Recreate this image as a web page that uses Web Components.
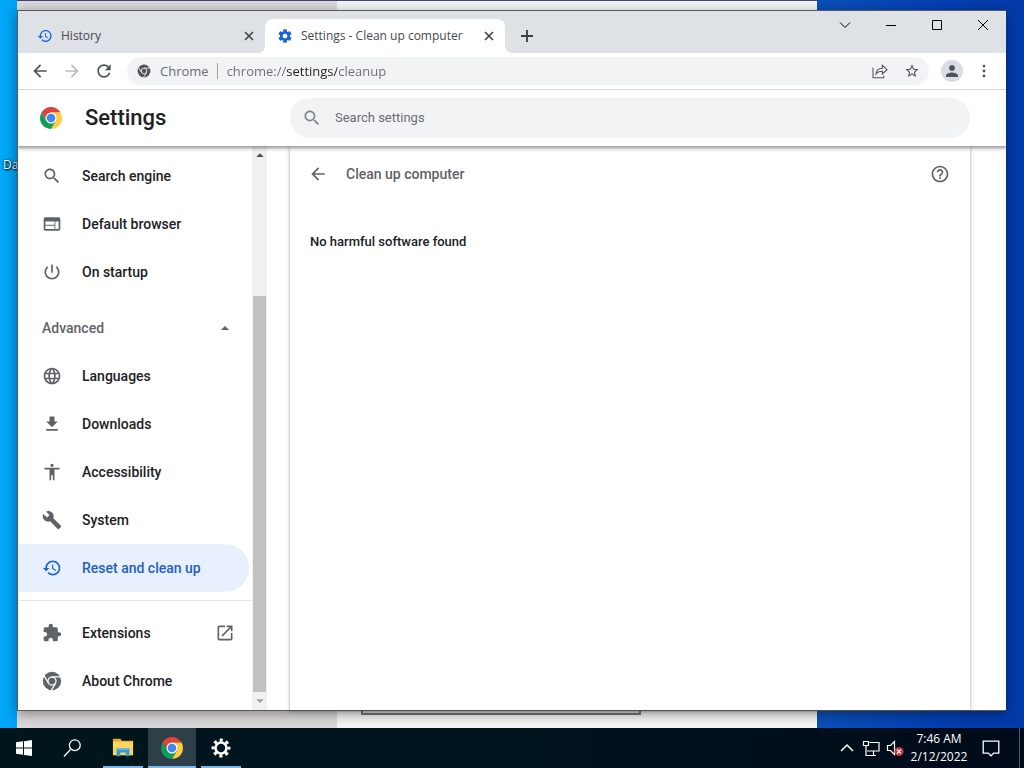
<!DOCTYPE html>
<html lang="en">
<head>
<meta charset="utf-8">
<meta name="viewport" content="width=device-width, initial-scale=1">
<title>Settings - Clean up computer</title>
<style>
  html, body { height: 100%; margin: 0; }
  body { overflow: hidden; font-family: "Open Sans", "Noto Sans", sans-serif; font-size: 12px; }
</style>
</head>
<body>
<desktop-shell>
  <backdrop-window></backdrop-window>
  <browser-window>
    <tab-strip slot="tabs">
      <browser-tab icon="restore">History</browser-tab>
      <browser-tab icon="gear" active>Settings - Clean up computer</browser-tab>
    </tab-strip>
    <browser-toolbar slot="toolbar"></browser-toolbar>
    <settings-page>
      <settings-menu slot="menu">
        <menu-item icon="search">Search engine</menu-item>
        <menu-item icon="web">Default browser</menu-item>
        <menu-item icon="power">On startup</menu-item>
        <menu-toggle>Advanced</menu-toggle>
        <menu-item icon="globe">Languages</menu-item>
        <menu-item icon="download">Downloads</menu-item>
        <menu-item icon="accessibility">Accessibility</menu-item>
        <menu-item icon="wrench">System</menu-item>
        <menu-item icon="restore" selected>Reset and clean up</menu-item>
        <menu-divider></menu-divider>
        <menu-item icon="extension" external>Extensions</menu-item>
        <menu-item icon="chrome-mono">About Chrome</menu-item>
      </settings-menu>
      <settings-subpage heading="Clean up computer">No harmful software found</settings-subpage>
    </settings-page>
  </browser-window>
  <task-bar slot="taskbar"></task-bar>
</desktop-shell>

<script>
// All icons use a 24x24 box and take their colour from the text colour.
const path = (d) => `<path d="${d}"/>`;
const line = (d, w = 1) =>
  `<path d="${d}" fill="none" stroke="currentColor" stroke-width="${w}"/>`;

const ICONS = {
  search: path('M15.5 14h-.79l-.28-.27C15.41 12.59 16 11.11 16 9.5 16 5.91 13.09 3 9.5 3S3 5.91 3 9.5 5.91 16 9.5 16c1.61 0 3.09-.59 4.23-1.57l.27.28v.79l5 4.99L20.49 19l-4.99-5zm-6 0C7.01 14 5 11.99 5 9.5S7.01 5 9.5 5 14 7.01 14 9.5 11.99 14 9.5 14z'),
  web: path('M20 4H4c-1.1 0-1.99.9-1.99 2L2 18c0 1.1.9 2 2 2h16c1.1 0 2-.9 2-2V6c0-1.1-.9-2-2-2zm-5 14H4v-4h11v4zm0-5H4V9h11v4zm5 5h-4V9h4v9z'),
  power: path('M13 3h-2v10h2V3zm4.83 2.17l-1.42 1.42C17.99 7.86 19 9.81 19 12c0 3.87-3.13 7-7 7s-7-3.13-7-7c0-2.19 1.01-4.14 2.58-5.42L6.17 5.17C4.23 6.82 3 9.26 3 12c0 4.97 4.03 9 9 9s9-4.03 9-9c0-2.74-1.23-5.18-3.17-6.83z'),
  globe: path('M11.99 2C6.47 2 2 6.48 2 12s4.47 10 9.99 10C17.52 22 22 17.52 22 12S17.52 2 11.99 2zm6.93 6h-2.95c-.32-1.25-.78-2.45-1.38-3.56 1.84.63 3.37 1.91 4.33 3.56zM12 4.04c.83 1.2 1.48 2.53 1.91 3.96h-3.82c.43-1.43 1.08-2.76 1.91-3.96zM4.26 14C4.1 13.36 4 12.69 4 12s.1-1.36.26-2h3.38c-.08.66-.14 1.32-.14 2 0 .68.06 1.34.14 2H4.26zm.82 2h2.95c.32 1.25.78 2.45 1.38 3.56-1.84-.63-3.37-1.9-4.33-3.56zm2.95-8H5.08c.96-1.66 2.49-2.93 4.33-3.56C8.81 5.55 8.35 6.75 8.03 8zM12 19.96c-.83-1.2-1.48-2.53-1.91-3.96h3.82c-.43 1.43-1.08 2.76-1.91 3.96zM14.34 14H9.66c-.09-.66-.16-1.32-.16-2 0-.68.07-1.35.16-2h4.68c.09.65.16 1.32.16 2 0 .68-.07 1.34-.16 2zm.25 5.56c.6-1.11 1.06-2.31 1.38-3.56h2.95c-.96 1.65-2.49 2.93-4.33 3.56zM16.36 14c.08-.66.14-1.32.14-2 0-.68-.06-1.34-.14-2h3.38c.16.64.26 1.31.26 2s-.1 1.36-.26 2h-3.38z'),
  download: path('M19 9h-4V3H9v6H5l7 7 7-7zM5 18v2h14v-2H5z'),
  accessibility: path('M12 2c1.1 0 2 .9 2 2s-.9 2-2 2-2-.9-2-2 .9-2 2-2zm9 7h-6v13h-2v-6h-2v6H9V9H3V7h18v2z'),
  wrench: path('M22.7 19l-9.1-9.1c.9-2.3.4-5-1.5-6.9-2-2-5-2.4-7.4-1.3L9 6 6 9 1.6 4.7C.4 7.1.9 10.1 2.9 12.1c1.9 1.9 4.6 2.4 6.9 1.5l9.1 9.1c.4.4 1 .4 1.4 0l2.3-2.3c.5-.4.5-1.1.1-1.4z'),
  restore: path('M13 3c-4.97 0-9 4.03-9 9H1l3.89 3.89.07.14L9 12H6c0-3.87 3.13-7 7-7s7 3.13 7 7-3.13 7-7 7c-1.93 0-3.68-.79-4.94-2.06l-1.42 1.42C8.27 19.99 10.51 21 13 21c4.97 0 9-4.03 9-9s-4.03-9-9-9zm-1 5v5l4.28 2.54.72-1.21-3.5-2.08V8H12z'),
  extension: path('M20.5 11H19V7c0-1.1-.9-2-2-2h-4V3.5C13 2.12 11.88 1 10.5 1S8 2.12 8 3.5V5H4c-1.1 0-1.99.9-1.99 2v3.8H3.5c1.49 0 2.7 1.21 2.7 2.7s-1.21 2.7-2.7 2.7H2V20c0 1.1.9 2 2 2h3.8v-1.5c0-1.49 1.21-2.7 2.7-2.7 1.49 0 2.7 1.21 2.7 2.7V22H17c1.1 0 2-.9 2-2v-4h1.5c1.38 0 2.5-1.12 2.5-2.5S21.88 11 20.5 11z'),
  external: path('M19 19H5V5h7V3H5c-1.11 0-2 .9-2 2v14c0 1.1.89 2 2 2h14c1.1 0 2-.9 2-2v-7h-2v7zM14 3v2h3.59l-9.83 9.83 1.41 1.41L19 6.41V10h2V3h-7z'),
  back: path('M20 11H7.83l5.59-5.59L12 4l-8 8 8 8 1.41-1.41L7.83 13H20v-2z'),
  forward: path('M12 4l-1.41 1.41L16.17 11H4v2h12.17l-5.58 5.59L12 20l8-8z'),
  reload: path('M17.65 6.35C16.2 4.9 14.21 4 12 4c-4.42 0-7.99 3.58-7.99 8s3.57 8 7.99 8c3.73 0 6.84-2.55 7.73-6h-2.08c-.82 2.33-3.04 4-5.65 4-3.31 0-6-2.69-6-6s2.69-6 6-6c1.66 0 3.14.69 4.22 1.78L13 11h7V4l-2.35 2.35z'),
  star: path('M22 9.24l-7.19-.62L12 2 9.19 8.63 2 9.24l5.46 4.73L5.82 21 12 17.27 18.18 21l-1.63-7.03L22 9.24zM12 15.4l-3.76 2.27 1-4.28-3.32-2.88 4.38-.38L12 6.1l1.71 4.04 4.38.38-3.32 2.88 1 4.28L12 15.4z'),
  share: line('M1.500 7v15h16v-3M15.500 8V3.500l7 6.500-7 6.500v-4c-4 0-7 .8-9.500 4 .8-5.500 4.500-8.500 9.500-8.500z', 1.6),
  help: path('M11 18h2v-2h-2v2zm1-16C6.48 2 2 6.48 2 12s4.48 10 10 10 10-4.48 10-10S17.52 2 12 2zm0 18c-4.41 0-8-3.59-8-8s3.59-8 8-8 8 3.59 8 8-3.59 8-8 8zm0-14c-2.21 0-4 1.79-4 4h2c0-1.1.9-2 2-2s2 .9 2 2c0 2-3 1.75-3 5h2c0-2.25 3-2.5 3-5 0-2.21-1.79-4-4-4z'),
  gear: path('M19.43 12.98c.04-.32.07-.64.07-.98s-.03-.66-.07-.98l2.11-1.65c.19-.15.24-.42.12-.64l-2-3.46c-.12-.22-.39-.3-.61-.22l-2.49 1c-.52-.4-1.08-.73-1.69-.98l-.38-2.65C14.46 2.18 14.25 2 14 2h-4c-.25 0-.46.18-.49.42l-.38 2.65c-.61.25-1.17.59-1.69.98l-2.49-1c-.23-.09-.49 0-.61.22l-2 3.46c-.13.22-.07.49.12.64l2.11 1.65c-.04.32-.07.65-.07.98s.03.66.07.98l-2.11 1.65c-.19.15-.24.42-.12.64l2 3.46c.12.22.39.3.61.22l2.49-1c.52.4 1.08.73 1.69.98l.38 2.65c.03.24.24.42.49.42h4c.25 0 .46-.18.49-.42l.38-2.65c.61-.25 1.17-.59 1.69-.98l2.49 1c.23.09.49 0 .61-.22l2-3.46c.12-.22.07-.49-.12-.64l-2.11-1.65zM12 15.5c-1.93 0-3.5-1.57-3.5-3.5s1.57-3.5 3.5-3.5 3.5 1.57 3.5 3.5-1.57 3.5-3.5 3.5z'),
  person: path('M12 12c2.21 0 4-1.79 4-4s-1.79-4-4-4-4 1.79-4 4 1.79 4 4 4zm0 2c-2.67 0-8 1.34-8 4v2h16v-2c0-2.66-5.33-4-8-4z'),
  more: '<circle cx="12" cy="3.500" r="2.400"/><circle cx="12" cy="12" r="2.400"/><circle cx="12" cy="20.500" r="2.400"/>',
  close: line('M6 6l12 12M18 6L6 18', 2.4),
  plus: line('M12 3v18M3 12h18', 2.8),
  'caret-up': path('M7 14.500l5-5 5 5z'),
  'caret-down': path('M7 9.500l5 5 5-5z'),
  'win-chevron': line('M7 9.500l5 5 5-5', 1),
  'win-minimize': line('M7 12.500h10', 1),
  'win-maximize': line('M7.500 7.500h9v9h-9z', 1),
  'win-close': line('M7 7l10 10M17 7L7 17', 1),
  'chrome-mono': `
    <circle cx="12" cy="12" r="11"/>
    <g fill="none" stroke="var(--icon-gap, #fff)" stroke-width="1.500">
      <path d="M12 7h10.500M7.700 14.500L2.500 5.500M16.300 14.500L11 23.500"/>
      <circle cx="12" cy="12" r="4.800"/>
    </g>`,
  chrome: `
    <path fill="#db4437" d="M1.610 6a12 12 0 0 1 20.780 0H12L6.800 15z"/>
    <path fill="#ffcd40" d="M22.390 6A12 12 0 0 1 12 24l5.200-9L12 6z"/>
    <path fill="#0f9d58" d="M12 24A12 12 0 0 1 1.610 6l5.190 9h10.400z"/>
    <circle cx="12" cy="12" r="6" fill="#fff"/>
    <circle cx="12" cy="12" r="4.700" fill="#4285f4"/>`,
  windows: path('M4 6.300L11 5.300V11.600H4zM12 5.200L20 4V11.600H12zM4 12.500H11V18.800L4 17.800zM12 12.500H20V20L12 18.900z'),
  'task-search': line('M4 20.500l6.500-7', 1.3) + '<circle cx="14.800" cy="9.200" r="5.400" fill="none" stroke="currentColor" stroke-width="1.300"/>',
  folder: `
    <path fill="#e8a82c" d="M1 2h8l2 2h12v3H1z"/>
    <path fill="#fcd462" d="M1 5h22v15H1z"/>
    <path fill="#3f98cf" d="M5 12h14v9h-4v-4H9v4H5z"/>
    <path fill="#6bb8e3" d="M5 12h14v2H5z"/>`,
  cog: `
    <circle cx="12" cy="12" r="6" fill="none" stroke="currentColor" stroke-width="2.800"/>
    <circle cx="12" cy="12" r="8.600" fill="none" stroke="currentColor" stroke-width="3.400"
      stroke-dasharray="3.377 3.377" stroke-dashoffset="1.688"/>`,
  'tray-chevron': line('M6 15l6-6 6 6', 1.5),
  network: line('M10.500 6.500h9.500v8.500H8M14.500 15v4M9 19.500h8M4.500 5.500h5v4h-5zM7 9.500v10h3', 1.2),
  muted: line('M4.500 9.500h3l4-4v13l-4-4h-3z', 1.2) +
    '<circle cx="16" cy="15.500" r="4.600" fill="#c9353a"/><path d="M14 13.500l4 4M18 13.500l-4 4" stroke="#fff" stroke-width="1.200"/>',
  notifications: line('M3.500 4.500h17v13h-5.500l-3 3-3-3H3.500z', 1.4),
};

/** Shared base: renders `template()` and `styles()` into an open shadow root. */
class BaseElement extends HTMLElement {
  connectedCallback() {
    if (this.shadowRoot) return;
    this.attachShadow({ mode: 'open' });
    this.shadowRoot.innerHTML = `
      <style>
        *, ::before, ::after { box-sizing: border-box; }
        :host { box-sizing: border-box; display: block; }
        button { display: flex; align-items: center; justify-content: center; flex: none;
          margin: 0; padding: 0; border: 0; background: none; color: inherit; font: inherit; }
        ${this.styles()}
      </style>
      ${this.template()}`;
  }

  styles() { return ''; }
  template() { return '<slot></slot>'; }
}

class UiIcon extends BaseElement {
  styles() {
    const size = Number(this.getAttribute('size')) || 20;
    return `
      :host { flex: none; width: ${size}px; height: ${size}px; }
      svg { display: block; width: 100%; height: 100%; fill: currentColor; }`;
  }
  template() {
    return `<svg viewBox="0 0 24 24" aria-hidden="true">${ICONS[this.getAttribute('name')] || ''}</svg>`;
  }
}

// --- Desktop ---

class DesktopShell extends BaseElement {
  styles() {
    return `
      :host { display: flex; flex-direction: column; height: 100vh; }
      .stage { position: relative; flex: 1; overflow: hidden;
        background: linear-gradient(90deg, #00a8f8 0, #00a0f4 2%, #0a50b8 80%, #033fb2 92%, #023aa8 100%); }
      .shortcut { position: absolute; left: 3px; top: 157px; color: #fff; line-height: 16px;
        text-shadow: 1px 1px 2px #000, 0 0 2px #000; }`;
  }
  template() {
    return `
      <div class="stage"><span class="shortcut">Da</span><slot></slot></div>
      <slot name="taskbar"></slot>`;
  }
}

/** Partly covered window behind the browser. */
class BackdropWindow extends BaseElement {
  styles() {
    return `
      :host { position: absolute; inset: 0 207px 0 17px; display: flex;
        border-top: 1px solid #3a4a70; background: #f6f5f6; }
      .side { flex: none; width: 320px; background: #dcd9da; }
      .content { flex: 1; display: flex; align-items: flex-end; padding: 0 24px 13px; }
      .field { width: 280px; height: 32px; border: 2px solid #767676; background: #e4e4e4; }`;
  }
  template() {
    return '<div class="side"></div><div class="content"><div class="field"></div></div>';
  }
}

// --- Browser frame ---

class BrowserWindow extends BaseElement {
  styles() {
    return `
      :host { position: absolute; inset: 10px 18px 17px 17px; display: flex; flex-direction: column;
        border: 1px solid #55585d; border-right-width: 0; background: #fff;
        box-shadow: 0 3px 12px rgba(0, 0, 0, .4); }`;
  }
  template() {
    return '<slot name="tabs"></slot><slot name="toolbar"></slot><slot></slot>';
  }
}

class TabStrip extends BaseElement {
  styles() {
    return `
      :host { display: flex; flex: none; height: 42px; padding-left: 7px; background: #dee1e6; color: #000; }
      .tabs { display: flex; align-items: flex-end; flex: 1; min-width: 0; }
      .new-tab { width: 28px; height: 34px; margin-left: 8px; color: #3c4043; }
      .controls { display: flex; flex: none; }
      .controls button { width: 46px; height: 28px; }`;
  }
  template() {
    return `
      <div class="tabs">
        <slot></slot>
        <button class="new-tab" aria-label="New tab"><ui-icon name="plus" size="16"></ui-icon></button>
      </div>
      <div class="controls">
        <button aria-label="Search tabs"><ui-icon name="win-chevron" size="24"></ui-icon></button>
        <button aria-label="Minimize"><ui-icon name="win-minimize" size="24"></ui-icon></button>
        <button aria-label="Maximize"><ui-icon name="win-maximize" size="24"></ui-icon></button>
        <button aria-label="Close"><ui-icon name="win-close" size="24"></ui-icon></button>
      </div>`;
  }
}

class BrowserTab extends BaseElement {
  styles() {
    return `
      :host { position: relative; display: flex; align-items: center; gap: 8px; flex: 0 1 240px;
        min-width: 0; height: 34px; padding: 0 8px 0 12px; color: #45494d; }
      :host([active]) { border-radius: 8px 8px 0 0; background: #fff; }
      /* flared feet of the active tab */
      :host([active])::before, :host([active])::after { content: ""; position: absolute; bottom: 0;
        width: 8px; height: 8px; }
      :host([active])::before { right: 100%; background: radial-gradient(circle at 0 0, transparent 8px, #fff 8px); }
      :host([active])::after { left: 100%; background: radial-gradient(circle at 100% 0, transparent 8px, #fff 8px); }
      .icon { color: #1a66d8; }
      .title { flex: 1; overflow: hidden; white-space: nowrap; line-height: 16px; }
      button { width: 16px; height: 16px; color: #3c4043; }`;
  }
  template() {
    return `
      <ui-icon class="icon" name="${this.getAttribute('icon')}" size="16"></ui-icon>
      <span class="title"><slot></slot></span>
      <button aria-label="Close tab"><ui-icon name="close" size="16"></ui-icon></button>`;
  }
}

class BrowserToolbar extends BaseElement {
  styles() {
    return `
      :host { display: flex; align-items: center; flex: none; height: 37px; padding: 0 6px;
        border-bottom: 1px solid #d5d7da; background: #fff; color: #50545a; font-size: 13px; }
      button { width: 32px; height: 32px; }
      .forward { color: #babcbe; }
      .omnibox { display: flex; align-items: center; flex: 1; min-width: 0; height: 28px;
        margin: 0 7px; padding: 0 1px 0 10px; border-radius: 14px; background: #f1f3f4;
        --icon-gap: #f1f3f4; }
      .scheme { padding: 0 8px 0 9px; border-right: 1px solid #9aa0a6; color: #6a6e73; line-height: 16px; }
      /* the host part of the address is darker than the rest */
      input { flex: 1; min-width: 0; height: 24px; margin: 0; padding: 0 9px; border: 0; outline: 0;
        color: #6a6e73; font: inherit;
        background: linear-gradient(90deg, #6a6e73 69px, #202124 69px 119px, #6a6e73 119px);
        -webkit-background-clip: text; background-clip: text; -webkit-text-fill-color: transparent; }
      .avatar { display: flex; align-items: center; justify-content: center;
        width: 22px; height: 22px; border-radius: 50%; background: #dadce6; }`;
  }
  template() {
    return `
      <button aria-label="Back"><ui-icon name="back"></ui-icon></button>
      <button class="forward" aria-label="Forward" disabled><ui-icon name="forward"></ui-icon></button>
      <button aria-label="Reload"><ui-icon name="reload"></ui-icon></button>
      <div class="omnibox">
        <ui-icon name="chrome-mono" size="14"></ui-icon>
        <span class="scheme">Chrome</span>
        <input type="text" aria-label="Address and search bar" value="chrome://settings/cleanup">
        <button aria-label="Share"><ui-icon name="share" size="16"></ui-icon></button>
        <button aria-label="Bookmark this tab"><ui-icon name="star" size="16"></ui-icon></button>
      </div>
      <button aria-label="Profile"><span class="avatar"><ui-icon name="person" size="18"></ui-icon></span></button>
      <button aria-label="Menu"><ui-icon name="more" size="14"></ui-icon></button>`;
  }
}

// --- Settings page ---

class SettingsPage extends BaseElement {
  styles() {
    return `
      :host { display: flex; flex-direction: column; flex: 1; min-height: 0;
        font-family: Roboto, sans-serif; font-size: 14px; color: #202124; }
      header { position: relative; z-index: 1; display: flex; align-items: center; flex: none;
        height: 56px; padding-right: 36px; background: #fff; box-shadow: 0 1px 4px 1px rgba(0, 0, 0, .45); clip-path: inset(0 0 -8px); }
      .brand { display: flex; align-items: center; gap: 23px; flex: none; width: 272px; padding-left: 22px; }
      h1 { margin: 0; font-size: 22px; font-weight: 500; line-height: 28px; }
      label { display: flex; align-items: center; flex: 1; gap: 13px; height: 40px; padding: 0 12px;
        border-radius: 20px; background: #f1f3f4; color: #80868b; }
      input { flex: 1; min-width: 0; padding: 0; border: 0; outline: 0; background: none;
        font: 13px/20px Roboto, sans-serif; color: inherit; }
      input::placeholder { color: #6a6e73; opacity: 1; }
      .body { display: flex; flex: 1; min-height: 0; }
      main { display: flex; flex: 1; min-width: 0; padding: 0 36px 0 23px; }`;
  }
  template() {
    return `
      <header>
        <div class="brand"><ui-icon name="chrome" size="22"></ui-icon><h1>Settings</h1></div>
        <label><ui-icon name="search"></ui-icon><input type="search" placeholder="Search settings" aria-label="Search settings"></label>
      </header>
      <div class="body">
        <slot name="menu"></slot>
        <main><slot></slot></main>
      </div>`;
  }
}

class SettingsMenu extends BaseElement {
  styles() {
    return `
      :host { display: flex; flex: none; width: 249px; }
      nav { flex: 1; overflow: hidden; padding-top: 6px; }
      .scrollbar { display: flex; flex-direction: column; align-items: center; flex: none; width: 15px;
        background: #f1f1f1; color: #505050; }
      .scrollbar button { height: 18px; width: 100%; }
      .scrollbar .end { color: #a0a0a0; }
      .track { display: flex; flex-direction: column; justify-content: flex-end; flex: 1; width: 13px; }
      .thumb { height: 75%; background: #c1c1c1; }`;
  }
  template() {
    return `
      <nav aria-label="Settings"><slot></slot></nav>
      <div class="scrollbar">
        <button tabindex="-1" aria-label="Scroll up"><ui-icon name="caret-up" size="18"></ui-icon></button>
        <div class="track"><div class="thumb"></div></div>
        <button class="end" tabindex="-1" aria-label="Scroll down"><ui-icon name="caret-down" size="18"></ui-icon></button>
      </div>`;
  }
}

class MenuItem extends BaseElement {
  styles() {
    return `
      a { display: flex; align-items: center; gap: 20px; height: 48px; margin-right: 3px;
        padding: 0 14px 0 24px; border-radius: 0 24px 24px 0; color: #202124;
        font-weight: 500; line-height: 20px; text-decoration: none; white-space: nowrap; }
      ui-icon { color: #5f6368; }
      span { flex: 1; }
      :host([selected]) a { background: #e8f0fe; color: #2260bd; }
      :host([selected]) ui-icon { color: #1a66d8; }`;
  }
  template() {
    const external = this.hasAttribute('external') ? '<ui-icon name="external"></ui-icon>' : '';
    const current = this.hasAttribute('selected') ? ' aria-current="page"' : '';
    return `<a href="#"${current}><ui-icon name="${this.getAttribute('icon')}"></ui-icon><span><slot></slot></span>${external}</a>`;
  }
}

class MenuToggle extends BaseElement {
  styles() {
    return `
      :host { padding-top: 8px; }
      button { justify-content: space-between; width: 100%; height: 48px; padding: 0 17px 0 24px;
        color: #5f6368; font-weight: 500; line-height: 20px; }`;
  }
  template() {
    return '<button aria-expanded="true"><slot></slot><ui-icon name="caret-up"></ui-icon></button>';
  }
}

class MenuDivider extends BaseElement {
  styles() {
    return `
      :host { padding: 8px 0; }
      hr { height: 1px; margin: 0; border: 0; background: #e4e6e8; }`;
  }
  template() { return '<hr>'; }
}

class SettingsSubpage extends BaseElement {
  styles() {
    return `
      :host { flex: 1; min-width: 0; background: #fff;
        box-shadow: 0 1px 2px rgba(60, 64, 67, .3), 0 1px 4px 1px rgba(60, 64, 67, .2); }
      .title { display: flex; align-items: center; gap: 18px; height: 56px; padding: 0 20px 0 18px; color: #5f6368; }
      .title button { width: 20px; height: 20px; }
      h2 { flex: 1; margin: 0; font-size: 14px; font-weight: 500; line-height: 20px; }
      .result { padding: 30px 20px; font-size: 13px; font-weight: 500; line-height: 20px; }`;
  }
  template() {
    return `
      <div class="title">
        <button aria-label="Back"><ui-icon name="back"></ui-icon></button>
        <h2>${this.getAttribute('heading')}</h2>
        <button aria-label="Help"><ui-icon name="help"></ui-icon></button>
      </div>
      <div class="result"><slot></slot></div>`;
  }
}

// --- Taskbar ---

class TaskBar extends BaseElement {
  styles() {
    return `
      :host { display: flex; flex: none; height: 40px; color: #fff;
        background: linear-gradient(90deg, #00161c, #00141e 50%, #000a1a); }
      .launch, .tasks, .tray { display: flex; }
      .launch button, .tasks button { width: 48px; }
      .tasks { gap: 1px; margin-left: 3px; }
      .tasks button { position: relative; }
      .tasks button::after { content: ""; position: absolute; inset: auto 4px 0; height: 2px; background: #76b9ed; }
      .tasks .current { background: #2d3f47; }
      .tasks .current::after { inset: auto 0 0; }
      .tray { margin-left: auto; }
      .tray button { width: 24px; }
      .tray .clock { flex-direction: column; width: 60px; padding-left: 4px; font-size: 12px; line-height: 18px; }
      .tray .center { width: 48px; }
      .tray .peek { width: 5px; margin-left: 4px; border-left: 1px solid #4c5560; }`;
  }
  template() {
    return `
      <div class="launch">
        <button aria-label="Start"><ui-icon name="windows" size="24"></ui-icon></button>
        <button aria-label="Search"><ui-icon name="task-search" size="24"></ui-icon></button>
      </div>
      <div class="tasks">
        <button aria-label="File Explorer"><ui-icon name="folder" size="22"></ui-icon></button>
        <button class="current" aria-label="Google Chrome"><ui-icon name="chrome" size="22"></ui-icon></button>
        <button aria-label="Settings"><ui-icon name="cog" size="22"></ui-icon></button>
      </div>
      <div class="tray">
        <button aria-label="Show hidden icons"><ui-icon name="tray-chevron" size="24"></ui-icon></button>
        <button aria-label="Network"><ui-icon name="network" size="24"></ui-icon></button>
        <button aria-label="Volume muted"><ui-icon name="muted" size="24"></ui-icon></button>
        <button class="clock"><time>7:46 AM</time><time datetime="2022-02-12">2/12/2022</time></button>
        <button class="center" aria-label="Notifications"><ui-icon name="notifications" size="22"></ui-icon></button>
        <button class="peek" aria-label="Show desktop"></button>
      </div>`;
  }
}

customElements.define('ui-icon', UiIcon);
customElements.define('desktop-shell', DesktopShell);
customElements.define('backdrop-window', BackdropWindow);
customElements.define('browser-window', BrowserWindow);
customElements.define('tab-strip', TabStrip);
customElements.define('browser-tab', BrowserTab);
customElements.define('browser-toolbar', BrowserToolbar);
customElements.define('settings-page', SettingsPage);
customElements.define('settings-menu', SettingsMenu);
customElements.define('menu-item', MenuItem);
customElements.define('menu-toggle', MenuToggle);
customElements.define('menu-divider', MenuDivider);
customElements.define('settings-subpage', SettingsSubpage);
customElements.define('task-bar', TaskBar);
</script>
</body>
</html>
